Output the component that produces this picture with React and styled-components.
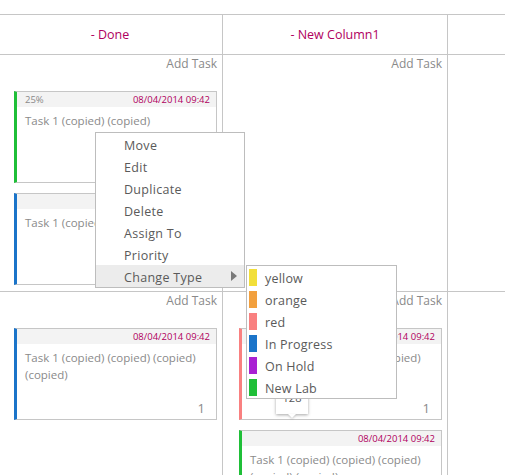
import React from "react";
import styled, { createGlobalStyle } from "styled-components";

const Global = createGlobalStyle`
  html, body { margin: 0; padding: 0; background: #fff; overflow: hidden; }
  body { font-family: "Open Sans", "Noto Sans", sans-serif; }
`;

const LINE = "#c6c6c6";
const ACCENT = "#b0005e";

const Page = styled.div`
  position: relative;
  width: 505px;
  height: 475px;
  overflow: hidden;
`;

const Board = styled.div`
  display: grid;
  grid-template-columns: 225px 225px 1fr;
  grid-template-rows: 40px 237px 1fr;
  margin: 14px 0 0 -2px;
  border-top: 1px solid ${LINE};
  height: 500px;
`;

const HeaderCell = styled.div`
  display: flex;
  align-items: center;
  justify-content: center;
  border-bottom: 1px solid ${LINE};
  border-right: ${(p) => (p.$last ? "none" : `1px solid ${LINE}`)};
  color: ${ACCENT};
  font-size: 12.5px;
`;

const Cell = styled.div`
  position: relative;
  display: flex;
  flex-direction: column;
  align-items: flex-start;
  padding: 0 5px 0 16px;
  border-bottom: 1px solid ${LINE};
  border-right: ${(p) => (p.$last ? "none" : `1px solid ${LINE}`)};
`;

const AddTask = styled.div`
  align-self: flex-end;
  color: #8a8a8a;
  font-size: 12px;
  line-height: 16px;
  padding-top: 1px;
  margin-bottom: 19px;
`;

const Card = styled.div`
  box-sizing: border-box;
  width: 203px;
  height: 92px;
  flex: none;
  display: flex;
  flex-direction: column;
  border: 1px solid ${LINE};
  border-left: 3px solid ${(p) => p.$color};
  background: #fff;
  & + & { margin-top: 10px; }
`;

const CardHead = styled.div`
  height: 15px;
  display: flex;
  justify-content: space-between;
  align-items: center;
  padding: 0 6px 0 8px;
  background: #f3f3f3;
  font-size: 9.5px;
  line-height: 15px;
`;

const Pct = styled.span`
  color: #8a8a8a;
`;

const Date = styled.span`
  color: ${ACCENT};
`;

const Title = styled.div`
  padding: 5px 8px 0 8px;
  font-size: 11.5px;
  line-height: 17px;
  color: #8a8a8a;
`;

const Count = styled.div`
  margin-top: auto;
  align-self: flex-end;
  padding: 0 11px 2px 0;
  font-size: 13px;
  line-height: 17px;
  color: #8a8a8a;
`;

const Tooltip = styled.div`
  position: absolute;
  left: 53px;
  top: 97px;
  width: 32px;
  height: 25px;
  box-sizing: border-box;
  background: #fff;
  box-shadow: 0 1px 3px rgba(0, 0, 0, 0.35);
  color: #555;
  font-size: 11px;
  line-height: 14px;
  text-align: center;
  padding-top: 2px;
  z-index: 1;
  &::after {
    content: "";
    position: absolute;
    left: 12px;
    bottom: -4px;
    border-left: 4px solid transparent;
    border-right: 4px solid transparent;
    border-top: 4px solid #fff;
    filter: drop-shadow(0 1px 1px rgba(0, 0, 0, 0.2));
  }
`;

const Menu = styled.ul`
  position: absolute;
  left: ${(p) => p.$x}px;
  top: ${(p) => p.$y}px;
  width: ${(p) => p.$w}px;
  box-sizing: border-box;
  margin: 0;
  padding: 0;
  list-style: none;
  background: #fff;
  border: 1px solid #bdbdbd;
  z-index: 5;
`;

const MenuItem = styled.li`
  position: relative;
  box-sizing: border-box;
  height: 22px;
  padding-top: 4px;
  line-height: 18px;
  padding-left: 28px;
  font-size: 12.5px;
  letter-spacing: 0.3px;
  color: #5a5a5a;
  background: ${(p) => (p.$active ? "#ececec" : "transparent")};
`;

const Arrow = styled.span`
  position: absolute;
  right: 7px;
  top: 6px;
  width: 0;
  height: 0;
  border-top: 5px solid transparent;
  border-bottom: 5px solid transparent;
  border-left: 6px solid #7a7a7a;
`;

const TypeItem = styled.li`
  height: 22px;
  display: flex;
  align-items: center;
  gap: 8px;
  padding-left: 2px;
  font-size: 12.5px;
  letter-spacing: 0.2px;
  color: #5a5a5a;
`;

const TypeLabel = styled.span`
  padding-top: 2px;
`;

const Swatch = styled.span`
  width: 8px;
  height: 17px;
  flex: none;
  background: ${(p) => p.$color};
`;

const menuItems = ["Move", "Edit", "Duplicate", "Delete", "Assign To", "Priority"];

const types = [
  ["yellow", "#f2df3a"],
  ["orange", "#f2a03e"],
  ["red", "#f98080"],
  ["In Progress", "#1b74c9"],
  ["On Hold", "#a921d3"],
  ["New Lab", "#1fbf38"],
];

const DATE = "08/04/2014 09:42";

export default function App() {
  return (
    <Page>
      <Global />
      <Board>
        <HeaderCell>- Done</HeaderCell>
        <HeaderCell>- New Column1</HeaderCell>
        <HeaderCell $last />

        <Cell>
          <AddTask>Add Task</AddTask>
          <Card $color="#1fbf38">
            <CardHead>
              <Pct>25%</Pct>
              <Date>{DATE}</Date>
            </CardHead>
            <Title>Task 1 (copied) (copied)</Title>
          </Card>
          <Card $color="#1b74c9">
            <CardHead />
            <Title>Task 1 (copied) (copied)</Title>
          </Card>
        </Cell>
        <Cell>
          <AddTask>Add Task</AddTask>
        </Cell>
        <Cell $last />

        <Cell>
          <AddTask>Add Task</AddTask>
          <Card $color="#1b74c9">
            <CardHead>
              <span />
              <Date>{DATE}</Date>
            </CardHead>
            <Title>Task 1 (copied) (copied) (copied) (copied)</Title>
            <Count>1</Count>
          </Card>
        </Cell>
        <Cell>
          <AddTask>Add Task</AddTask>
          <Card $color="#f98080">
            <CardHead>
              <span />
              <Date>{DATE}</Date>
            </CardHead>
            <Title>Task 1 (copied) (copied) (copied)</Title>
            <Count>1</Count>
          </Card>
          <Card $color="#1fbf38">
            <CardHead>
              <span />
              <Date>{DATE}</Date>
            </CardHead>
            <Title>Task 1 (copied) (copied) (copied) (copied) (copied)</Title>
          </Card>
          <Tooltip>128</Tooltip>
        </Cell>
        <Cell $last />
      </Board>

      <Menu $x={95} $y={132} $w={150}>
        {menuItems.map((m) => (
          <MenuItem key={m}>{m}</MenuItem>
        ))}
        <MenuItem $active>
          Change Type
          <Arrow />
        </MenuItem>
      </Menu>

      <Menu $x={246} $y={265} $w={151}>
        {types.map(([name, color]) => (
          <TypeItem key={name}>
            <Swatch $color={color} />
            <TypeLabel>{name}</TypeLabel>
          </TypeItem>
        ))}
      </Menu>
    </Page>
  );
}
